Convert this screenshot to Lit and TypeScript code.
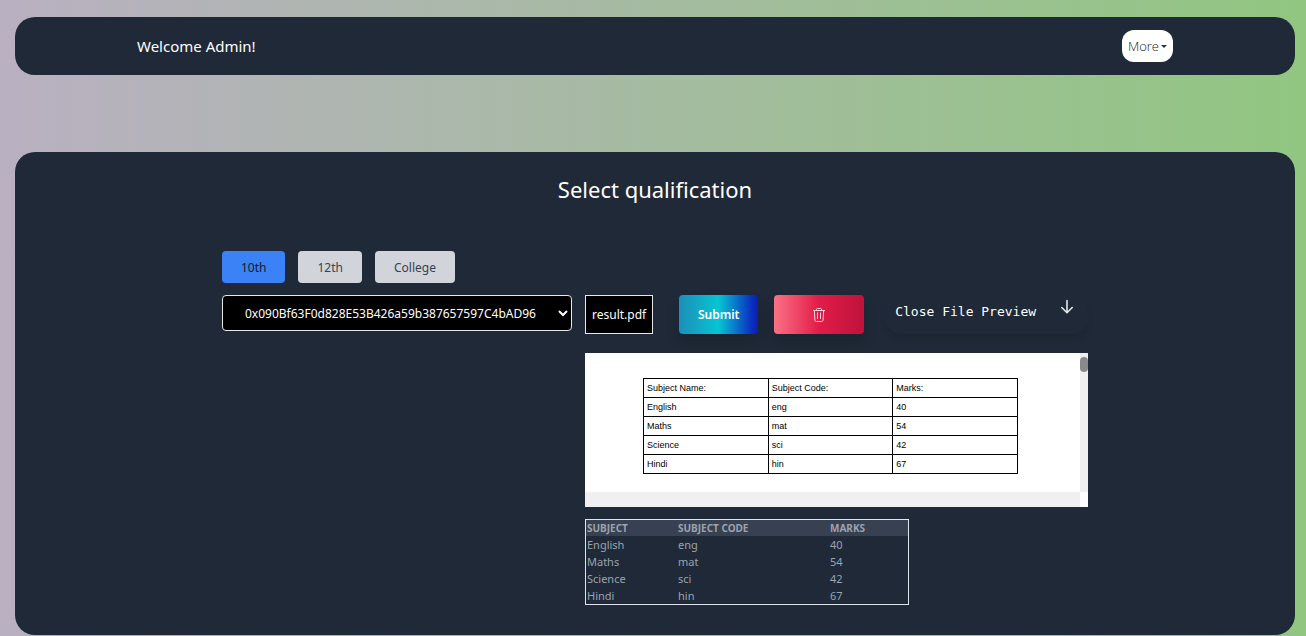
import { LitElement, html, css } from "lit";
import { customElement, state } from "lit/decorators.js";

interface Mark {
  subject: string;
  code: string;
  marks: number;
}

const MARKS: Mark[] = [
  { subject: "English", code: "eng", marks: 40 },
  { subject: "Maths", code: "mat", marks: 54 },
  { subject: "Science", code: "sci", marks: 42 },
  { subject: "Hindi", code: "hin", marks: 67 },
];

@customElement("app-header")
export class AppHeader extends LitElement {
  static styles = css`
    :host { display: block; }
    .bar {
      background: #1f2937;
      border-radius: 20px;
      padding: 13px 16px;
    }
    .inner {
      max-width: 1036px;
      margin: 0 auto;
      display: flex;
      align-items: center;
      justify-content: space-between;
    }
    .welcome { color: #fff; font-size: 15px; line-height: 32px; }
    .more {
      display: flex;
      align-items: center;
      gap: 2px;
      height: 32px;
      padding: 0 6px;
      border: 0;
      border-radius: 12px;
      background: #fff;
      color: #222;
      font: 300 13px "Open Sans", "Noto Sans", sans-serif;
    }
    .caret {
      border: 3px solid transparent;
      border-top-color: #333;
      border-bottom: 0;
    }
  `;

  render() {
    return html`
      <header class="bar">
        <div class="inner">
          <span class="welcome">Welcome Admin!</span>
          <button class="more" type="button">More<span class="caret"></span></button>
        </div>
      </header>
    `;
  }
}

@customElement("file-preview")
export class FilePreview extends LitElement {
  static styles = css`
    :host { display: block; }
    .frame {
      display: grid;
      grid-template-columns: 1fr 8px;
      grid-template-rows: auto 15px;
      background: #fff;
    }
    .page { padding: 25px 62px 18px 58px; }
    .track { background: #f0f0f0; padding-top: 4px; }
    .thumb { height: 15px; border-radius: 4px; background: #8a8a8a; }
    .foot { background: #f0f0f0; }
    table {
      width: 100%;
      table-layout: fixed;
      border-collapse: collapse;
      font: 9px "Liberation Sans", Arial, sans-serif;
      color: #000;
    }
    th, td {
      border: 1px solid #000;
      padding: 1px 3px 0;
      height: 17px;
      line-height: 17px;
      font-weight: 400;
      text-align: left;
    }
  `;

  render() {
    return html`
      <div class="frame">
        <div class="page">
          <table>
            <thead>
              <tr><th>Subject Name:</th><th>Subject Code:</th><th>Marks:</th></tr>
            </thead>
            <tbody>
              ${MARKS.map((m) => html`<tr><td>${m.subject}</td><td>${m.code}</td><td>${m.marks}</td></tr>`)}
            </tbody>
          </table>
        </div>
        <div class="track"><div class="thumb"></div></div>
        <div class="foot"></div>
      </div>
    `;
  }
}

@customElement("marks-table")
export class MarksTable extends LitElement {
  static styles = css`
    :host { display: block; }
    table {
      width: 324px;
      max-width: 100%;
      table-layout: fixed;
      border: 1px solid #dfe5ee;
      border-collapse: separate;
      border-spacing: 0;
      color: #9ca3af;
      font-size: 11px;
      line-height: 17px;
      text-align: left;
    }
    .c1 { width: 89px; }
    .c2 { width: 150px; }
    th, td { padding: 0 1px; }
    th {
      background: #374151;
      font-size: 10px;
      font-weight: 700;
      line-height: 16px;
      text-transform: uppercase;
    }
  `;

  render() {
    return html`
      <table>
        <thead>
          <tr><th class="c1">Subject</th><th class="c2">Subject code</th><th>Marks</th></tr>
        </thead>
        <tbody>
          ${MARKS.map((m) => html`<tr><td>${m.subject}</td><td>${m.code}</td><td>${m.marks}</td></tr>`)}
        </tbody>
      </table>
    `;
  }
}

@customElement("app-root")
export class AppRoot extends LitElement {
  static styles = css`
    :host {
      display: block;
      box-sizing: border-box;
      min-height: 100vh;
      padding: 17px 11px 1px 15px;
      background: linear-gradient(to right, #b9b0c1, #91c681);
      font-family: "Noto Sans", "Open Sans", sans-serif;
    }
    button, select { font-family: inherit; cursor: pointer; }
    .panel {
      margin-top: 77px;
      padding: 20px 16px 30px;
      border-radius: 20px;
      background: #1f2937;
    }
    h1 {
      margin: 0;
      color: #fff;
      font-size: 22px;
      font-weight: 400;
      line-height: 34px;
      text-align: center;
    }
    .content { max-width: 866px; margin: 45px auto 0; }
    .tabs { display: flex; gap: 13px; }
    .tab {
      height: 32px;
      padding: 0 19px;
      border: 0;
      border-radius: 4px;
      background: #d1d5db;
      color: #374151;
      font-size: 12px;
    }
    .tab.active { background: #3b82f6; color: #10182b; }
    .work {
      display: grid;
      grid-template-columns: 350px minmax(0, 1fr);
      column-gap: 13px;
      margin-top: 12px;
      align-items: start;
    }
    .address {
      width: 100%;
      height: 36px;
      padding: 0 0 0 18px;
      border: 1px solid #e5e7eb;
      border-radius: 4px;
      background: #000;
      color: #fff;
      font-size: 12px;
    }
    .tools { display: flex; align-items: stretch; height: 39px; }
    .file {
      display: flex;
      align-items: center;
      box-sizing: border-box;
      padding: 0 6px;
      border: 1px solid #e5e7eb;
      background: #000;
      color: #fff;
      font-size: 12px;
    }
    .submit, .remove {
      border: 0;
      border-radius: 4px;
      color: #fff;
      box-shadow: 0 8px 14px rgba(0, 0, 0, 0.12);
    }
    .submit {
      width: 79px;
      padding: 0;
      margin-left: 26px;
      background: linear-gradient(to right, #1c8fb8, #06c5d2 50%, #0a2fc0 92%, #0a1fb0);
      font-size: 12px;
      font-weight: 600;
    }
    .remove {
      display: flex;
      align-items: center;
      justify-content: center;
      width: 90px;
      margin-left: 16px;
      background: linear-gradient(to right, #fb7185, #e11d48 50%, #be123c);
    }
    .toggle {
      flex: 1;
      display: flex;
      align-items: flex-start;
      justify-content: space-between;
      margin-left: 21px;
      padding: 4px 14px 0 10px;
      border: 0;
      border-radius: 16px;
      background: #1f2937;
      color: #fff;
      box-shadow: 0 6px 10px -4px rgba(0, 0, 0, 0.15);
    }
    .toggle-label {
      font: 13px/26px "DejaVu Sans Mono", "Liberation Mono", monospace;
      white-space: nowrap;
    }
    .preview { margin-top: 19px; }
    .result { margin-top: 12px; }
    svg { display: block; }
  `;

  @state() private level = "10th";

  render() {
    return html`
      <app-header></app-header>
      <main class="panel">
        <h1>Select qualification</h1>
        <div class="content">
          <div class="tabs">
            ${["10th", "12th", "College"].map(
              (l) => html`<button
                type="button"
                class=${l === this.level ? "tab active" : "tab"}
                @click=${() => (this.level = l)}
              >${l}</button>`
            )}
          </div>
          <div class="work">
            <select class="address" aria-label="Student address">
              <option>0x090Bf63F0d828E53B426a59b387657597C4bAD96</option>
            </select>
            <div>
              <div class="tools">
                <span class="file">result.pdf</span>
                <button class="submit" type="button">Submit</button>
                <button class="remove" type="button" aria-label="Delete file">
                  <svg width="14" height="16" viewBox="0 0 14 16" fill="none" stroke="#fbd5dd" stroke-width="1">
                    <path d="M1.5 3.5h11M4.5 3.5V2.4c0-.6.4-.9 1-.9h3c.6 0 1 .3 1 .9v1.1M2.3 3.5l.6 9.4c.1.9.6 1.6 1.5 1.6h5.2c.9 0 1.4-.7 1.5-1.6l.6-9.4M5.5 6v5.5M8.5 6v5.5" stroke-linecap="round" stroke-linejoin="round" />
                  </svg>
                </button>
                <button class="toggle" type="button">
                  <span class="toggle-label">Close File Preview</span>
                  <svg width="14" height="16" viewBox="0 0 14 16" fill="none" stroke="#e5e7eb" stroke-width="1.6" stroke-linecap="round" stroke-linejoin="round">
                    <path d="M7 1.5v12M1.8 8.5 7 13.7l5.2-5.2" />
                  </svg>
                </button>
              </div>
              <file-preview class="preview"></file-preview>
              <marks-table class="result"></marks-table>
            </div>
          </div>
        </div>
      </main>
    `;
  }
}
